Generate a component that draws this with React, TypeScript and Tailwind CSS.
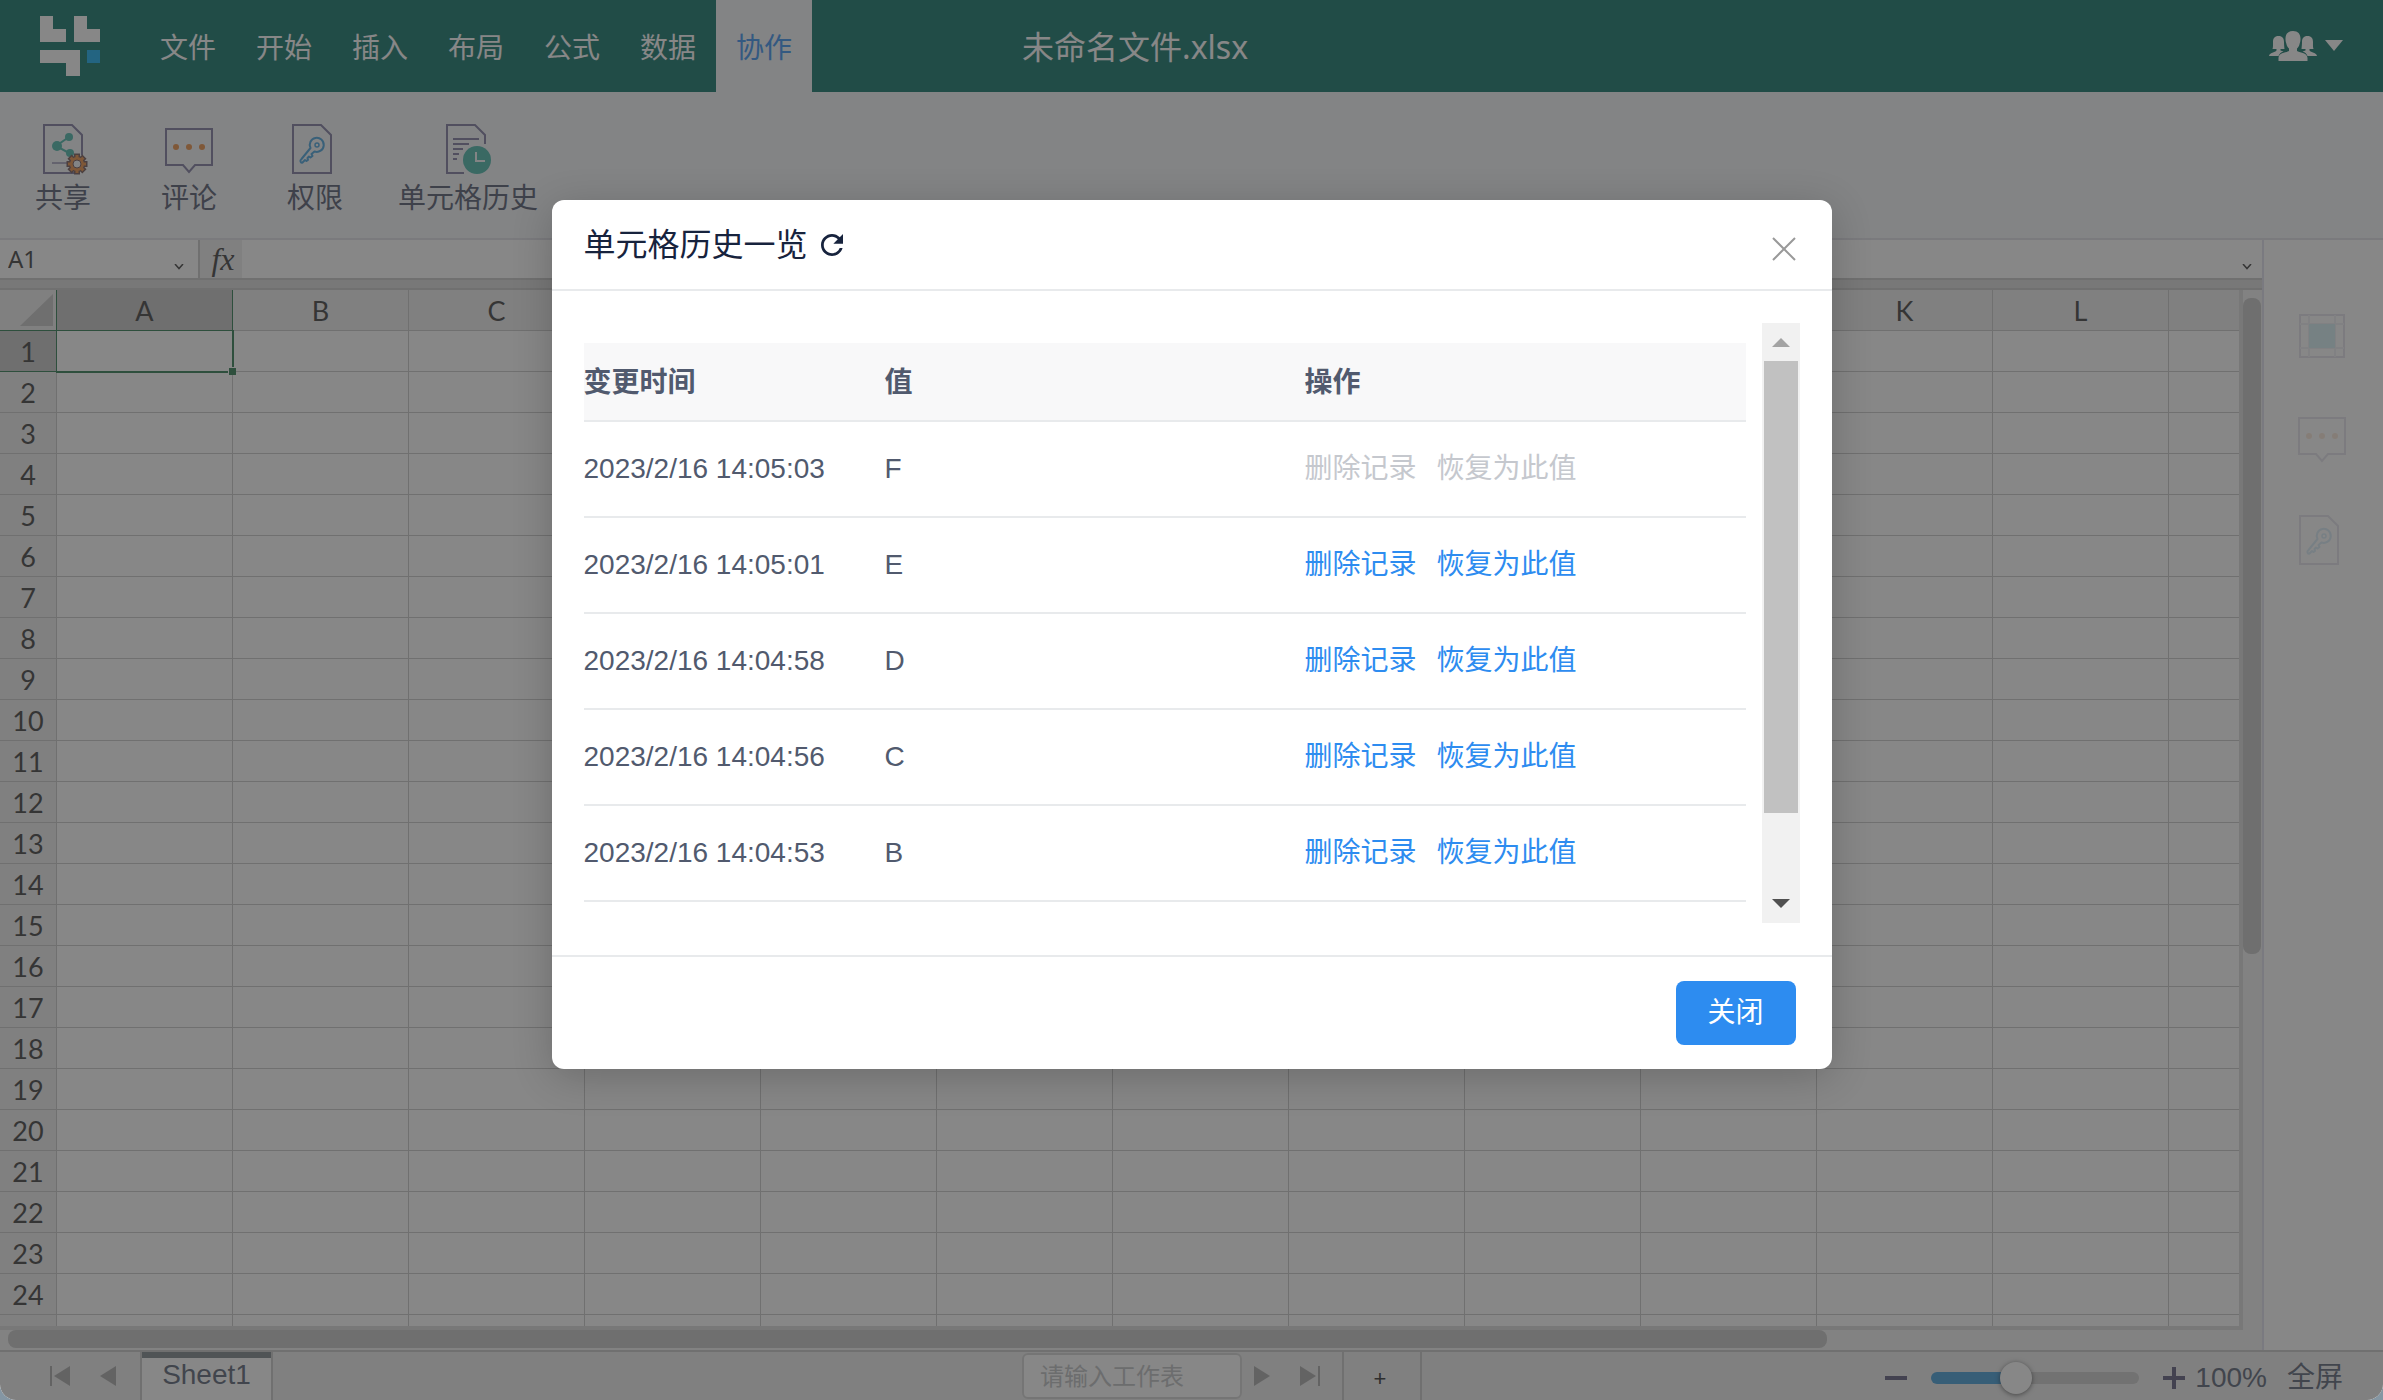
import { useState } from "react"
import { IoMdRefresh } from "react-icons/io"

interface HistoryRecord {
  time: string
  value: string
  current?: boolean
}

const menus = ["文件", "开始", "插入", "布局", "公式", "数据", "协作"]

const columns = ["A", "B", "C", "D", "E", "F", "G", "H", "I", "J", "K", "L"]

const rows = Array.from({ length: 24 }, (_, i) => i + 1)

const records: HistoryRecord[] = [
  { time: "2023/2/16 14:05:03", value: "F", current: true },
  { time: "2023/2/16 14:05:01", value: "E" },
  { time: "2023/2/16 14:04:58", value: "D" },
  { time: "2023/2/16 14:04:56", value: "C" },
  { time: "2023/2/16 14:04:53", value: "B" },
]

function Logo() {
  return (
    <svg width="60" height="60" viewBox="0 0 60 60" aria-hidden="true">
      <path fill="#fff" d="M0 0h13v13h13v13H0zM34 0h13v13h13v13H34zM0 34h40v26H26V47H0z" />
      <path fill="#05a8f0" d="M47 34h13v13H47z" />
    </svg>
  )
}

const gearTeeth = [0, 45, 90, 135, 180, 225, 270, 315]

function ShareIcon() {
  return (
    <svg width="52" height="52" viewBox="0 0 52 52" fill="none" aria-hidden="true">
      <path d="M45 32V12L35 2H7v48h30" stroke="#78749c" strokeWidth="2" />
      <path d="M32 14L19 23l13 7" stroke="#3fb3a6" strokeWidth="2" />
      <circle cx="20" cy="23" r="5" fill="#3fb3a6" />
      <circle cx="32" cy="14" r="4" fill="#3fb3a6" />
      <circle cx="33" cy="30" r="4" fill="#3fb3a6" />
      <path d="M15 40h15" stroke="#a8a5c0" strokeWidth="2" />
      <g stroke="#6b4f50" strokeWidth="2">
        {gearTeeth.map((angle) => (
          <path key={angle} d="M38 35v-3.500h4V35" fill="#ec8a3a" transform={`rotate(${angle} 40 41)`} />
        ))}
        <circle cx="40" cy="41" r="7" />
      </g>
      <g fill="#ec8a3a">
        {gearTeeth.map((angle) => (
          <path key={angle} d="M38.500 32h3v4h-3z" transform={`rotate(${angle} 40 41)`} />
        ))}
        <circle cx="40" cy="41" r="7" />
      </g>
      <circle cx="40" cy="41" r="4" fill="#f5f7fa" stroke="#6b4f50" strokeWidth="1" />
    </svg>
  )
}

function CommentIcon() {
  return (
    <svg width="52" height="52" viewBox="0 0 52 52" fill="none" aria-hidden="true">
      <path d="M3 6h46v36H32l-6 7-6-7H3z" stroke="#78749c" strokeWidth="2" />
      <circle cx="13" cy="24" r="3" fill="#ec8a3a" />
      <circle cx="26" cy="24" r="3" fill="#ec8a3a" />
      <circle cx="39" cy="24" r="3" fill="#ec8a3a" />
    </svg>
  )
}

function KeyIcon() {
  return (
    <svg width="52" height="52" viewBox="0 0 52 52" fill="none" aria-hidden="true">
      <path d="M4 2h28l10 10v38H4z" stroke="#78749c" strokeWidth="2" />
      <path
        d="M21.500 25a7 7 0 1 1 4 3.500L22.500 31l1 2-2 1.500-1.500-1-1.500 1.500.5 2-1.500 1-1.500-1-2.500 2.500q-1.500.5-2-1t1-2.500z"
        stroke="#3d9fdc"
        strokeWidth="2"
        strokeLinejoin="round"
      />
      <circle cx="28" cy="22" r="2" stroke="#3d9fdc" strokeWidth="1.500" />
    </svg>
  )
}

function HistoryIcon() {
  return (
    <svg width="52" height="52" viewBox="0 0 52 52" fill="none" aria-hidden="true">
      <path d="M43 21v-9L33 2H5v48h17" stroke="#78749c" strokeWidth="2" />
      <path d="M11 16h26M11 21h16M11 26h10M11 31h6M11 36h4" stroke="#78749c" strokeWidth="2" />
      <circle cx="35" cy="37" r="14" fill="#3fb3a6" />
      <path d="M34 29v9h9" stroke="#f5f7fa" strokeWidth="2" />
    </svg>
  )
}

function CellIcon() {
  return (
    <svg width="52" height="52" viewBox="0 0 52 52" fill="none" aria-hidden="true">
      <path d="M4 5h44v42H4z" stroke="#78749c" strokeWidth="2" />
      <path d="M4 14h44M4 38h44M13 5v42M39 5v42" stroke="#b8b6cc" strokeWidth="2" />
      <path d="M13 14h26v24H13z" fill="#2fb5d0" />
    </svg>
  )
}

function UsersIcon() {
  return (
    <svg width="48" height="30" viewBox="0 0 48 30" fill="#fff" aria-hidden="true">
      <path d="M24 0c5 0 7.500 3 7.500 7.500 0 2-.2 3.500-.8 5-.6 3-1.700 4-2.700 5v2.500c2 1.500 10.500 1.500 10.500 7V30h-29v-3c0-5.500 8.500-5.500 10.500-7v-2.500c-1-1-2.100-2-2.700-5-.6-1.500-.8-3-.8-5C16.500 3 19 0 24 0z" />
      <path d="M9.500 5c4 0 5.500 2.500 5.500 6 0 2.500.3 5 .5 7h-4v1.500l3 1c-3 1-4 2-5 4.500H0c.5-3.500 6-3.500 7.500-5.500V18H3.500c.7-2 .5-4.500.5-7 0-3.500 1.500-6 5.500-6z" />
      <path d="M38.500 5c-4 0-5.500 2.500-5.500 6 0 2.500-.3 5-.5 7h4v1.500l-3 1c3 1 4 2 5 4.500H48c-.5-3.500-6-3.500-7.500-5.500V18h4c-.7-2-.5-4.500-.5-7 0-3.500-1.500-6-5.500-6z" />
    </svg>
  )
}

function Chevron() {
  return (
    <svg width="10" height="6" viewBox="0 0 10 6" fill="none" aria-hidden="true">
      <path d="M1 0l4 4.500L9 0" stroke="#333" strokeWidth="1.500" />
    </svg>
  )
}

const tools = [
  { label: "共享", icon: <ShareIcon /> },
  { label: "评论", icon: <CommentIcon /> },
  { label: "权限", icon: <KeyIcon /> },
  { label: "单元格历史", icon: <HistoryIcon /> },
]

const panels = [
  { label: "单元格", icon: <CellIcon /> },
  { label: "评论", icon: <CommentIcon /> },
  { label: "权限", icon: <KeyIcon /> },
]

function Header() {
  return (
    <header className="flex h-[92px] shrink-0 items-center bg-[#026b5f] pl-10 text-[28px] text-white">
      <Logo />
      <nav className="ml-10 flex h-full">
        {menus.map((menu) => (
          <button
            key={menu}
            className={menu === "协作" ? "bg-[#f5f7fa] px-5 pt-0.5 text-[#2d8cf0]" : "px-5 pt-0.5"}
          >
            {menu}
          </button>
        ))}
      </nav>
      <h1 className="w-[646px] pt-0.5 text-center text-[32px]">未命名文件.xlsx</h1>
      <button aria-label="用户" className="mr-10 ml-auto flex items-center gap-2">
        <UsersIcon />
        <svg width="18" height="12" viewBox="0 0 18 12" fill="#fff" aria-hidden="true">
          <path d="M0 0h18l-9 11z" />
        </svg>
      </button>
    </header>
  )
}

function Ribbon() {
  return (
    <div className="flex h-[148px] shrink-0 border-b-2 border-[#dfdfe6] bg-[#f5f7fa] text-[28px] text-[#4a5068]">
      {tools.map((tool) => (
        <button key={tool.label} className="flex min-w-[126px] flex-col items-center px-5 pt-[31px]">
          {tool.icon}
          <span className="leading-[44px]">{tool.label}</span>
        </button>
      ))}
    </div>
  )
}

function FormulaBar() {
  return (
    <>
      <div className="flex h-10 shrink-0 border-b-2 border-[#c6c6c6] bg-white text-[#333]">
        <input aria-label="名称框" defaultValue="A1" className="w-[160px] pl-2 text-2xl leading-8" />
        <button aria-label="展开名称框" className="flex w-[38px] items-center justify-center pt-4">
          <Chevron />
        </button>
        <button className="w-11 border-l-2 border-[#c6c6c6] bg-[#ededed] pl-1 font-['Liberation_Serif'] text-[32px] leading-9 italic">
          fx
        </button>
        <input aria-label="编辑栏" className="min-w-0 flex-1 px-2 text-2xl" />
        <button aria-label="展开编辑栏" className="flex w-[30px] items-center justify-center pt-4">
          <Chevron />
        </button>
      </div>
      <div className="h-[10px] shrink-0 border-b-2 border-[#c6c6c6] bg-[#dadada]" />
    </>
  )
}

function Sheet() {
  return (
    <div className="min-h-0 flex-1 overflow-hidden border-r-4 border-b-4 border-[#dadada] bg-white">
      <table className="w-full table-fixed border-separate border-spacing-0 font-['Lato'] text-[27px] leading-10 text-[#333]">
        <colgroup>
          <col className="w-[57px]" />
          {columns.map((col) => (
            <col key={col} className="w-[176px]" />
          ))}
          <col />
        </colgroup>
        <thead>
          <tr className="bg-[#ededed]">
            <th aria-label="全选" className="h-[41px] border-r border-b border-[#217346] p-0">
              <svg className="ml-5" width="34" height="34" viewBox="0 0 34 34" aria-hidden="true">
                <path d="M33 1v32H0z" fill="#c2c2c2" />
              </svg>
            </th>
            {columns.map((col) => (
              <th
                key={col}
                className={
                  col === "A"
                    ? "border-r border-b border-[#217346] bg-[#c2c2c2] p-0 pt-0.5 leading-[38px] font-normal"
                    : "border-r border-b border-[#c6c6c6] p-0 pt-0.5 leading-[38px] font-normal"
                }
              >
                {col}
              </th>
            ))}
            <th className="border-b border-[#c6c6c6] p-0" />
          </tr>
        </thead>
        <tbody>
          {rows.map((row) => (
            <tr key={row}>
              <th
                className={
                  row === 1
                    ? "h-[41px] border-r border-b border-[#217346] bg-[#c2c2c2] p-0 pt-0.5 leading-[38px] font-normal"
                    : "h-[41px] border-r border-b border-[#c6c6c6] bg-[#ededed] p-0 pt-0.5 leading-[38px] font-normal"
                }
              >
                {row}
              </th>
              {columns.map((col) => (
                <td key={col} className="relative border-r border-b border-[#c6c6c6] p-0">
                  {row === 1 && col === "A" && (
                    <div className="absolute -top-px -right-0.5 -bottom-0.5 -left-px z-10 border-t border-r-2 border-b-2 border-l border-[#217346]">
                      <span className="absolute -right-1 -bottom-1 size-2 border-t border-l border-white bg-[#217346]" />
                    </div>
                  )}
                </td>
              ))}
              <td className="border-b border-[#c6c6c6] p-0" />
            </tr>
          ))}
          {/* last row, cut by the scroll bar */}
          <tr>
            <th className="h-[41px] border-r border-[#c6c6c6] bg-[#ededed] p-0" />
            {columns.map((col) => (
              <td key={col} className="border-r border-[#c6c6c6] p-0" />
            ))}
            <td className="p-0" />
          </tr>
        </tbody>
      </table>
    </div>
  )
}

function StatusBar() {
  return (
    <footer className="flex h-[50px] shrink-0 items-center border-t-2 border-[#c6c6c6] bg-[#ededed] text-[28px] text-[#515a6e]">
      <button aria-label="第一个工作表" className="ml-[50px]">
        <svg width="20" height="20" viewBox="0 0 20 20" fill="#a6a6a6" aria-hidden="true">
          <path d="M0 0h2v20H0zM20 0v20L4 10z" />
        </svg>
      </button>
      <button aria-label="上一个工作表" className="ml-[30px]">
        <svg width="16" height="20" viewBox="0 0 16 20" fill="#a6a6a6" aria-hidden="true">
          <path d="M16 0v20L0 10z" />
        </svg>
      </button>
      <button className="ml-6 flex h-full w-[133px] items-start justify-center border-x-2 border-[#c6c6c6] bg-white">
        <span className="w-full border-t-[6px] border-[#757f85] leading-[34px]">Sheet1</span>
      </button>
      <input
        aria-label="工作表"
        placeholder="请输入工作表"
        className="ml-[749px] h-[46px] w-[220px] rounded-md border-2 border-[#d3d3d3] bg-white px-4 pt-0.5 text-2xl placeholder:text-[#bbbdc0]"
      />
      <button aria-label="下一个工作表" className="ml-3">
        <svg width="16" height="20" viewBox="0 0 16 20" fill="#a6a6a6" aria-hidden="true">
          <path d="M0 0v20l16-10z" />
        </svg>
      </button>
      <button aria-label="最后一个工作表" className="ml-[30px]">
        <svg width="20" height="20" viewBox="0 0 20 20" fill="#a6a6a6" aria-hidden="true">
          <path d="M18 0h2v20h-2zM0 0v20l16-10z" />
        </svg>
      </button>
      <button className="ml-[22px] h-full w-20 border-x-2 border-[#c6c6c6] pt-1 pr-1 text-[22px] text-[#222]">+</button>
      <button aria-label="缩小" className="ml-auto pt-1">
        <svg width="22" height="22" viewBox="0 0 22 22" fill="#555475" aria-hidden="true">
          <path d="M0 9h22v4H0z" />
        </svg>
      </button>
      <input
        type="range"
        aria-label="缩放"
        defaultValue={39}
        className="mt-1 ml-6 h-8 w-[208px] appearance-none bg-transparent [&::-webkit-slider-runnable-track]:h-3 [&::-webkit-slider-runnable-track]:rounded-full [&::-webkit-slider-runnable-track]:bg-[linear-gradient(to_right,#3798d7_40%,#cacaca_40%)] [&::-webkit-slider-thumb]:-mt-[10px] [&::-webkit-slider-thumb]:size-8 [&::-webkit-slider-thumb]:appearance-none [&::-webkit-slider-thumb]:rounded-full [&::-webkit-slider-thumb]:bg-white [&::-webkit-slider-thumb]:shadow-[0_1px_5px_rgba(0,0,0,0.6)]"
      />
      <button aria-label="放大" className="ml-6 pt-1">
        <svg width="22" height="22" viewBox="0 0 22 22" fill="#555475" aria-hidden="true">
          <path d="M0 9h22v4H0zM9 0h4v22H9z" />
        </svg>
      </button>
      <span className="ml-[10px] pt-1">100%</span>
      <button className="mr-10 ml-5 pt-1">全屏</button>
    </footer>
  )
}

function HistoryModal({ onClose }: { onClose: () => void }) {
  return (
    <div className="absolute inset-0 z-20 flex items-start justify-center bg-[rgba(55,55,55,0.6)] pt-[200px]">
      <div
        role="dialog"
        aria-labelledby="history-title"
        className="w-[1280px] max-w-full rounded-xl bg-white text-[28px] text-[#515a6e] shadow-[0_8px_40px_rgba(0,0,0,0.2)]"
      >
        <div className="flex h-[91px] items-center border-b-2 border-[#e8eaec] pr-9 pl-8 text-[32px] text-[#17233d]">
          <h2 id="history-title">单元格历史一览</h2>
          <button aria-label="刷新" className="ml-2">
            <IoMdRefresh />
          </button>
          <button aria-label="关闭窗口" className="ml-auto pt-2" onClick={onClose}>
            <svg width="24" height="24" viewBox="0 0 24 24" stroke="#999" strokeWidth="2" aria-hidden="true">
              <path d="M1 1l22 22M23 1L1 23" />
            </svg>
          </button>
        </div>
        <div className="px-8 py-8">
          <div className="flex h-[600px] gap-4 overflow-hidden">
            <div className="flex-1 pt-5">
              <table className="w-full table-fixed border-separate border-spacing-0 text-left">
                <colgroup>
                  <col className="w-[301px]" />
                  <col className="w-[420px]" />
                  <col />
                </colgroup>
                <thead className="bg-[#f8f8f9]">
                  <tr className="h-[79px]">
                    <th className="border-b-2 border-[#e8eaec] p-0 pt-0.5">变更时间</th>
                    <th className="border-b-2 border-[#e8eaec] p-0 pt-0.5">值</th>
                    <th className="border-b-2 border-[#e8eaec] p-0 pt-0.5">操作</th>
                  </tr>
                </thead>
                <tbody>
                  {records.map((record) => (
                    <tr key={record.time} className="h-24">
                      <td className="border-b-2 border-[#e8eaec] p-0">{record.time}</td>
                      <td className="border-b-2 border-[#e8eaec] p-0">{record.value}</td>
                      <td className="border-b-2 border-[#e8eaec] p-0">
                        <div className={record.current ? "flex gap-5 text-[#c5c8ce]" : "flex gap-5 text-[#2d8cf0]"}>
                          <button disabled={record.current}>删除记录</button>
                          <button disabled={record.current}>恢复为此值</button>
                        </div>
                      </td>
                    </tr>
                  ))}
                </tbody>
              </table>
            </div>
            <div className="flex w-[38px] flex-col items-center bg-[#f1f1f1]">
              <svg className="my-3" width="18" height="14" viewBox="0 0 18 14" aria-hidden="true">
                <path d="M0 12h18L9 3z" fill="#a3a3a3" />
              </svg>
              <div className="h-[452px] w-[34px] bg-[#c1c1c1]" />
              <svg className="mt-auto mb-3" width="18" height="14" viewBox="0 0 18 14" aria-hidden="true">
                <path d="M0 2h18l-9 9z" fill="#505050" />
              </svg>
            </div>
          </div>
        </div>
        <div className="flex justify-end border-t-2 border-[#e8eaec] py-6 pr-9">
          <button className="h-16 w-[120px] rounded-lg bg-[#2d8cf0] text-white" onClick={onClose}>
            关闭
          </button>
        </div>
      </div>
    </div>
  )
}

export default function App() {
  const [open, setOpen] = useState(true)

  return (
    <div className="bg-[#8496a3] font-['Liberation_Sans','Noto_Sans_CJK_SC',sans-serif]">
      <div className="relative flex h-screen flex-col overflow-hidden rounded-b-2xl bg-white">
        <div className="flex min-h-0 flex-1 flex-col font-['Noto_Sans','Noto_Sans_CJK_SC',sans-serif]">
          <Header />
          <Ribbon />
          <div className="flex min-h-0 flex-1">
            <main className="flex min-w-0 flex-1 flex-col">
              <FormulaBar />
              <div className="flex min-h-0 flex-1 bg-[#f3f3f3]">
                <div className="flex min-w-0 flex-1 flex-col">
                  <Sheet />
                  <div className="h-5 shrink-0 pl-2">
                    <div className="h-[18px] w-[1819px] max-w-full rounded-lg bg-[#c2c2c2]" />
                  </div>
                </div>
                <div className="w-[19px] pt-2">
                  <div className="h-[656px] w-[18px] rounded-lg bg-[#c2c2c2]" />
                </div>
              </div>
            </main>
            <aside className="flex w-[121px] shrink-0 flex-col items-center gap-[50px] border-l-2 border-[#dfdfee] pt-[70px] pr-1">
              {panels.map((panel) => (
                <button key={panel.label} aria-label={panel.label} className="opacity-20">
                  {panel.icon}
                </button>
              ))}
            </aside>
          </div>
        </div>
        <StatusBar />
        {open && <HistoryModal onClose={() => setOpen(false)} />}
      </div>
    </div>
  )
}
